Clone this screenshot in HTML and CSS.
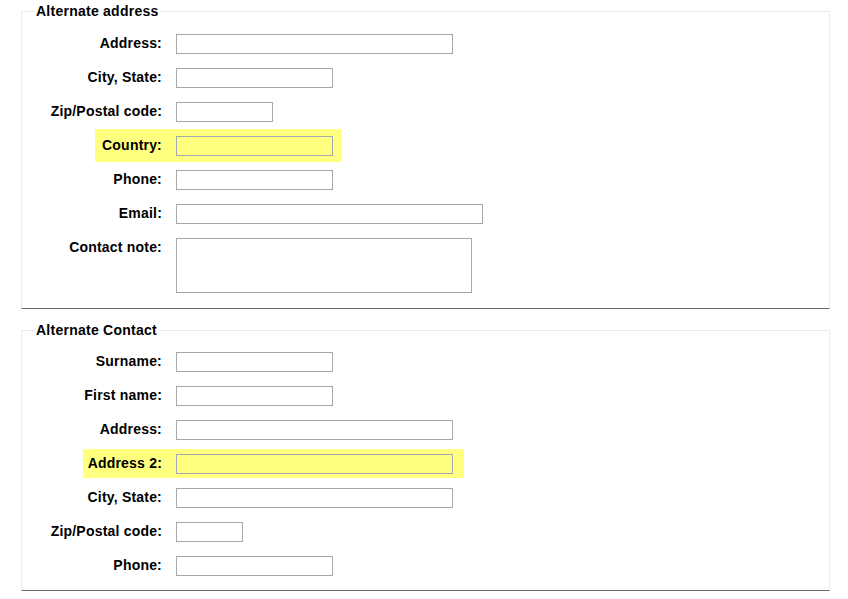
FILE: index.html
```html
<!DOCTYPE html>
<html>
<head>
<meta charset="utf-8">
<link rel="stylesheet" href="styles.css">
</head>
<body>
<form class="page">
  <fieldset class="box">
    <legend>Alternate address</legend>
    <div class="rows">
      <div class="row"><div class="lab"><span class="lt">Address:</span></div><div class="fld"><input class="w277"></div></div>
      <div class="row"><div class="lab"><span class="lt">City, State:</span></div><div class="fld"><input class="w157"></div></div>
      <div class="row"><div class="lab"><span class="lt">Zip/Postal code:</span></div><div class="fld"><input class="w97"></div></div>
      <div class="row hl hl-a"><div class="lab"><span class="lt">Country:</span></div><div class="fld"><input class="w157"></div></div>
      <div class="row"><div class="lab"><span class="lt">Phone:</span></div><div class="fld"><input class="w157"></div></div>
      <div class="row"><div class="lab"><span class="lt">Email:</span></div><div class="fld"><input class="w307"></div></div>
      <div class="row"><div class="lab"><span class="lt">Contact note:</span></div><div class="fld"><textarea class="note"></textarea></div></div>
    </div>
  </fieldset>
  <fieldset class="box box-last">
    <legend>Alternate Contact</legend>
    <div class="rows">
      <div class="row"><div class="lab"><span class="lt">Surname:</span></div><div class="fld"><input class="w157"></div></div>
      <div class="row"><div class="lab"><span class="lt">First name:</span></div><div class="fld"><input class="w157"></div></div>
      <div class="row"><div class="lab"><span class="lt">Address:</span></div><div class="fld"><input class="w277"></div></div>
      <div class="row hl hl-b"><div class="lab"><span class="lt">Address 2:</span></div><div class="fld"><input class="w277"></div></div>
      <div class="row"><div class="lab"><span class="lt">City, State:</span></div><div class="fld"><input class="w277"></div></div>
      <div class="row"><div class="lab"><span class="lt">Zip/Postal code:</span></div><div class="fld"><input class="w67"></div></div>
      <div class="row"><div class="lab"><span class="lt">Phone:</span></div><div class="fld"><input class="w157"></div></div>
    </div>
  </fieldset>
</form>
</body>
</html>
```
FILE: styles.css
```css
html, body {
  margin: 0;
  padding: 0;
  background: #ffffff;
}
body {
  font-family: "Liberation Sans", Arial, sans-serif;
  font-size: 14px;
  color: #000;
}
.page {
  padding: 3px 18px 0 21px;
  display: flex;
  flex-direction: column;
  gap: 13px;
}
.box {
  margin: 0;
  padding: 15px 13px 15px 13px;
  border: 1px solid #ebebeb;
  border-bottom-color: #6a6a6a;
  min-width: 0;
}
.box-last {
  padding-top: 14px;
  padding-bottom: 14px;
}
.box legend {
  padding: 0 1px;
  font-weight: bold;
  font-size: 14px;
  line-height: 16px;
  letter-spacing: 0.25px;
}
.rows {
  display: flex;
  flex-direction: column;
  gap: 14px;
}
.row {
  display: flex;
  align-items: flex-start;
}
.lab {
  width: 141px;
  flex: none;
  display: flex;
  justify-content: flex-end;
}
.lt {
  display: block;
  padding-right: 14px;
  padding-bottom: 2px;
  font-weight: bold;
  line-height: 18px;
  letter-spacing: 0.2px;
  white-space: nowrap;
}
.fld {
  display: flex;
}
input, textarea {
  box-sizing: border-box;
  margin: 0;
  border: 1px solid #a5a8ac;
  background: #fff;
  font: 13px "Liberation Sans", Arial, sans-serif;
  padding: 1px 3px;
  outline: none;
  border-radius: 0;
}
input { height: 20px; }
.w67 { width: 67px; }
.w97 { width: 97px; }
.w157 { width: 157px; }
.w277 { width: 277px; }
.w307 { width: 307px; }
.note {
  width: 296px;
  height: 55px;
  resize: none;
  display: block;
}
.hl .lt, .hl .fld {
  background: #ffff80;
}
.hl input {
  background: #ffff80;
}
.hl-a .lt {
  padding-top: 7px;
  padding-bottom: 8px;
  margin: -7px 0 -6px;
  padding-left: 7px;
}
.hl-a .fld {
  padding: 7px 8px 6px 0;
  margin: -7px 0 -6px;
}
.hl-b .lt {
  padding-top: 5px;
  padding-bottom: 6px;
  margin: -5px 0 -4px;
  padding-left: 5px;
}
.hl-b .fld {
  padding: 5px 11px 4px 0;
  margin: -5px 0 -4px;
}
```
